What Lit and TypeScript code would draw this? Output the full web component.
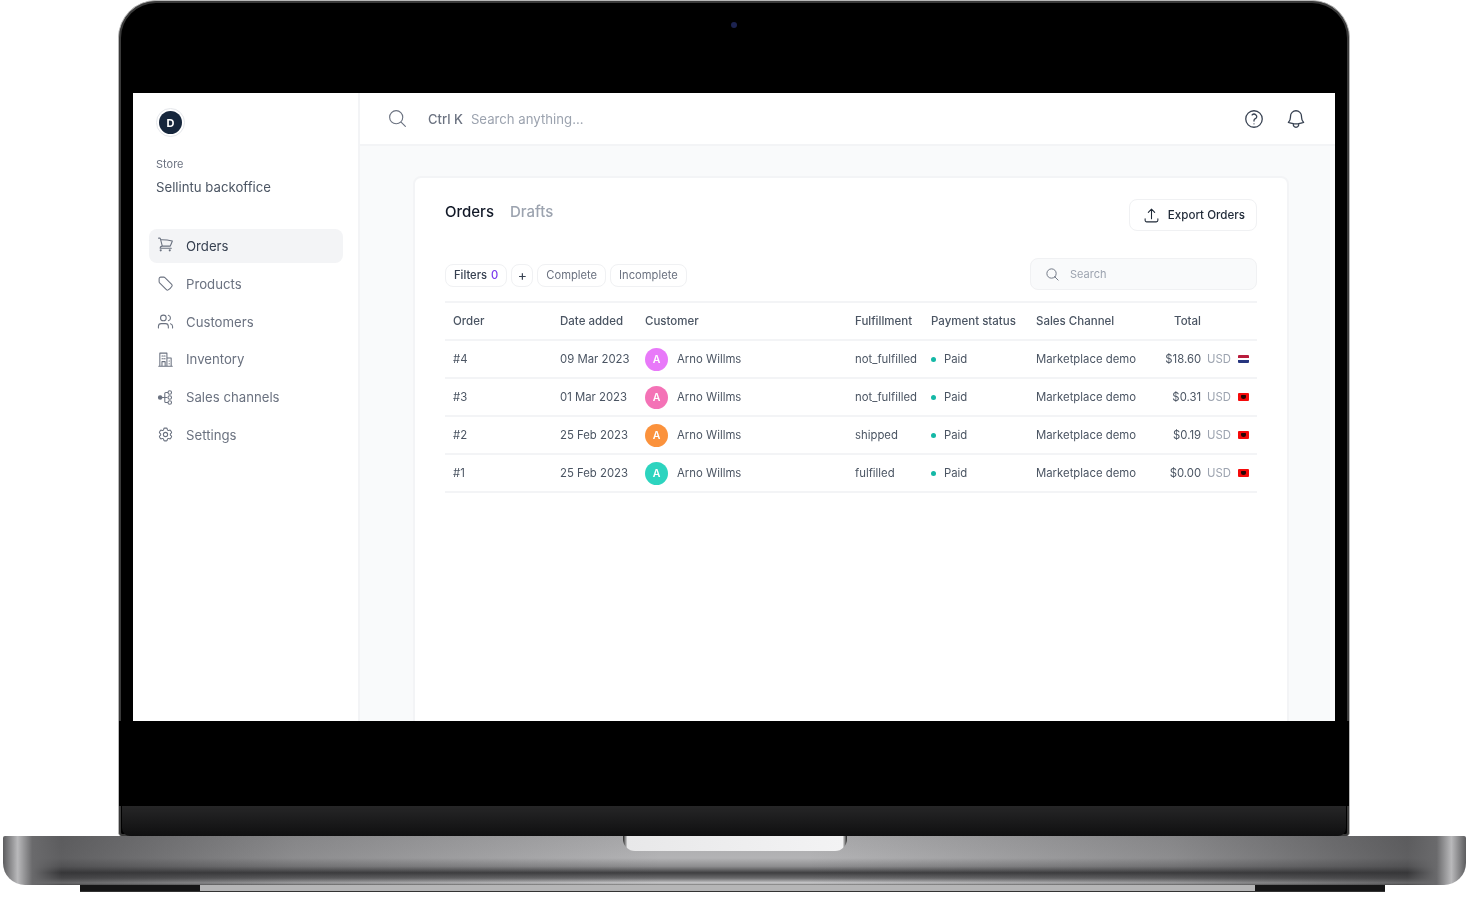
import { LitElement, html, css, svg } from "lit";
import { customElement } from "lit/decorators.js";

const ic = (body: unknown, sw = 1.5) => html`<svg class="ic" viewBox="0 0 24 24" fill="none" stroke="currentColor" stroke-width=${sw} stroke-linecap="round" stroke-linejoin="round">${body}</svg>`;

const icons = {
  search: svg`<path d="M21 21l-5.197-5.197m0 0A7.5 7.5 0 105.196 5.196a7.5 7.5 0 0010.607 10.607z"/>`,
  cart: svg`<path d="M2.25 3h1.386c.51 0 .955.343 1.087.835l.383 1.437M7.5 14.25a3 3 0 00-3 3h15.75m-12.75-3h11.218c1.121-2.3 2.1-4.684 2.924-7.138a60.114 60.114 0 00-16.536-1.84M7.5 14.25L5.106 5.272M6 20.25a.75.75 0 11-1.5 0 .75.75 0 011.5 0zm12.75 0a.75.75 0 11-1.5 0 .75.75 0 011.5 0z"/>`,
  tag: svg`<path d="M9.568 3H5.25A2.25 2.25 0 003 5.25v4.318c0 .597.237 1.17.659 1.591l9.581 9.581c.699.699 1.78.872 2.607.33a18.095 18.095 0 005.223-5.223c.542-.827.369-1.908-.33-2.607L11.16 3.66A2.25 2.25 0 009.568 3z"/>`,
  users: svg`<path d="M16 21v-2a4 4 0 0 0-4-4H6a4 4 0 0 0-4 4v2"/><circle cx="9" cy="7" r="4"/><path d="M22 21v-2a4 4 0 0 0-3-3.87"/><path d="M16 3.13a4 4 0 0 1 0 7.75"/>`,
  building: svg`<path d="M2.5 21.5h19M4 21.5V3h10v18.5M14 10h6v11.5M7 7h1.5M10 7h1.5M7 11h1.5M10 11h1.5M7 15h4.5v6.5H7zM17 14h.5M17 18h.5"/>`,
  channels: svg`<circle cx="4.5" cy="12" r="2.5" fill="currentColor"/><path d="M7 12h7M11 12V6.5c0-1 .5-1.5 1.5-1.5H15M11 12v5.5c0 1 .5 1.5 1.5 1.5H15"/><circle cx="18" cy="5" r="2.5"/><circle cx="18" cy="12" r="2.5"/><circle cx="18" cy="19" r="2.5"/>`,
  cog: svg`<path d="M9.594 3.94c.09-.542.56-.94 1.11-.94h2.593c.55 0 1.02.398 1.11.94l.213 1.281c.063.374.313.686.645.87.074.04.147.083.22.127.324.196.72.257 1.075.124l1.217-.456a1.125 1.125 0 011.37.49l1.296 2.247a1.125 1.125 0 01-.26 1.431l-1.003.827c-.293.24-.438.613-.431.992a6.759 6.759 0 010 .255c-.007.378.138.75.43.99l1.005.828c.424.35.534.954.26 1.43l-1.298 2.247a1.125 1.125 0 01-1.369.491l-1.217-.456c-.355-.133-.75-.072-1.076.124a6.57 6.57 0 01-.22.128c-.331.183-.581.495-.644.869l-.213 1.28c-.09.543-.56.941-1.11.941h-2.594c-.55 0-1.02-.398-1.11-.94l-.213-1.281c-.062-.374-.312-.686-.644-.87a6.52 6.52 0 01-.22-.127c-.325-.196-.72-.257-1.076-.124l-1.217.456a1.125 1.125 0 01-1.369-.49l-1.297-2.247a1.125 1.125 0 01.26-1.431l1.004-.827c.292-.24.437-.613.43-.992a6.932 6.932 0 010-.255c.007-.378-.138-.75-.43-.99l-1.004-.828a1.125 1.125 0 01-.26-1.43l1.297-2.247a1.125 1.125 0 011.37-.491l1.216.456c.356.133.751.072 1.076-.124.072-.044.146-.087.22-.128.332-.183.582-.495.644-.869l.214-1.281z"/><circle cx="12" cy="12" r="3"/>`,
  help: svg`<path d="M9.879 7.519c1.171-1.025 3.071-1.025 4.242 0 1.172 1.025 1.172 2.687 0 3.712-.203.179-.43.326-.67.442-.745.361-1.45.999-1.45 1.827v.75M21 12a9 9 0 11-18 0 9 9 0 0118 0zm-9 5.25h.008v.008H12v-.008z"/>`,
  bell: svg`<path d="M14.857 17.082a23.848 23.848 0 005.454-1.31A8.967 8.967 0 0118 9.75V9A6 6 0 006 9v.75a8.967 8.967 0 01-2.312 6.022c1.733.64 3.56 1.085 5.455 1.31m5.714 0a24.255 24.255 0 01-5.714 0m5.714 0a3 3 0 11-5.714 0"/>`,
  upload: svg`<path d="M3 16.5v2.25A2.25 2.25 0 005.25 21h13.5A2.25 2.25 0 0021 18.75V16.5m-13.5-9L12 3m0 0l4.5 4.5M12 3v13.5"/>`,
};

const nav = [
  ["Orders", icons.cart, true],
  ["Products", icons.tag, false],
  ["Customers", icons.users, false],
  ["Inventory", icons.building, false],
  ["Sales channels", icons.channels, false],
  ["Settings", icons.cog, false],
] as const;

const rows = [
  { id: "#4", date: "09 Mar 2023", color: "#e879f9", ful: "not_fulfilled", total: "$18.60", flag: "nl" },
  { id: "#3", date: "01 Mar 2023", color: "#f472b6", ful: "not_fulfilled", total: "$0.31", flag: "al" },
  { id: "#2", date: "25 Feb 2023", color: "#fb923c", ful: "shipped", total: "$0.19", flag: "al" },
  { id: "#1", date: "25 Feb 2023", color: "#2dd4bf", ful: "fulfilled", total: "$0.00", flag: "al" },
];

@customElement("app-root")
export class AppRoot extends LitElement {
  static styles = css`
    :host { display: block; width: 1469px; height: 900px; background: #fff; overflow: hidden; font-family: Inter, "Liberation Sans", sans-serif; }
    * { box-sizing: border-box; }
    .ic { display: block; flex: none; }

    .lid { width: 1232px; height: 836px; margin-left: 118px; background: #000; border-radius: 38px 38px 4px 4px; border: 1px solid #b8b8b8; border-bottom: 0; box-shadow: inset 0 0 0 2px #3a3a3a; display: flex; flex-direction: column; }
    .cam { height: 92px; display: flex; justify-content: center; padding-top: 21px; }
    .cam i { width: 6px; height: 6px; border-radius: 50%; background: #1c2350; }
    .screen { margin: 0 14px; height: 628px; flex: none; background: #fff; display: flex; overflow: hidden; filter: blur(.4px); color: #4b5563; }
    .lower { flex: 1; background: #000; }
    .chin { height: 30px; margin: 0 3px; background: linear-gradient(#262627, #0f0f10); border-radius: 0 0 8px 8px; }

    .side { width: 227px; flex: none; border-right: 2px solid #f3f4f6; padding: 16px 15px 0 16px; }
    .logo { width: 29px; height: 29px; margin-left: 7px; margin-top: -1px; border-radius: 50%; border: 1px solid #e5e7eb; padding: 2px; }
    .logo span { display: flex; width: 100%; height: 100%; border-radius: 50%; background: #16263c; color: #fff; font-size: 11px; font-weight: 700; align-items: center; justify-content: center; }
    .store { margin: 19px 0 0 7px; font-size: 11px; line-height: 16px; color: #6b7280; }
    .brand { margin: 6px 0 0 7px; font-size: 13.2px; line-height: 18px; color: #4b5563; }
    .nav { margin-top: 33px; display: flex; flex-direction: column; gap: 3.8px; }
    .item { height: 34px; display: flex; align-items: center; gap: 12px; padding-left: 8px; border-radius: 8px; font-size: 13.2px; color: #6b7280; }
    .item .ic { width: 17px; height: 17px; color: #6b7280; }
    .item.on { background: #f3f4f6; color: #374151; }
    .item.on .ic { margin-top: -4px; }

    .main { flex: 1; min-width: 0; display: flex; flex-direction: column; background: #f9fafb; }
    .top { height: 53px; flex: none; background: #fff; border-bottom: 2px solid #f3f4f6; display: flex; align-items: center; padding: 0 28px 0 27px; }
    .top .s { width: 21px; height: 21px; color: #6b7280; }
    .kbd { margin-left: 20px; font-size: 13px; font-weight: 500; color: #6b7280; }
    .ph { margin-left: 8px; font-size: 13.2px; color: #9ca3af; }
    .top .h { margin-left: auto; width: 22px; height: 22px; color: #374151; }
    .top .b { margin-left: 20px; width: 22px; height: 22px; color: #374151; }

    .body { padding: 30px 46px 0 53px; }
    .card { height: 600px; background: #fff; border: 2px solid #f3f4f6; border-radius: 8px; padding: 23px 30px 0 30px; }
    .head { display: flex; align-items: flex-start; }
    .tab { font-size: 15px; font-weight: 500; color: #111827; line-height: 22px; }
    .tab.off { margin-left: 16px; color: #9ca3af; }
    .export { margin-left: auto; margin-top: -2px; height: 32px; display: flex; align-items: center; gap: 8px; padding: 0 11px 0 13px; background: #fff; border: 1.5px solid #f0f1f3; border-radius: 8px; font-family: inherit; font-size: 11.6px; font-weight: 500; color: #1f2937; }
    .export .ic { width: 17px; height: 17px; color: #1f2937; }

    .filters { margin-top: 28px; display: flex; align-items: center; gap: 4px; height: 32px; }
    .chip { height: 23px; display: flex; align-items: center; padding: 0 8px; border: 1.5px solid #f0f1f3; border-radius: 8px; font-size: 11.2px; color: #6b7280; background: #fff; white-space: nowrap; }
    .chip.f { font-weight: 500; color: #374151; }
    .chip b { margin-left: 4px; color: #7c3aed; font-weight: 500; }
    .chip.p { width: 22px; padding: 0 0 2px; justify-content: center; font-size: 14px; color: #374151; }
    .find { margin-left: auto; margin-bottom: 2px; width: 227px; height: 32px; display: flex; align-items: center; gap: 10px; padding-left: 14px; background: #f9fafb; border: 1.5px solid #f0f1f3; border-radius: 8px; font-size: 11px; color: #9ca3af; }
    .find .ic { width: 15px; height: 15px; color: #6b7280; }

    .table { margin-top: 10px; border-top: 2px solid #f3f4f6; font-size: 11.35px; }
    .row { display: grid; grid-template-columns: 107px 85px 210px 76px 105px 1fr 110px; align-items: center; height: 38px; padding: 0 8px; border-bottom: 2px solid #f3f4f6; color: #4b5563; white-space: nowrap; }
    .row.hd { font-weight: 500; font-size: 11.5px; color: #4b5563; }
    .who { display: flex; align-items: center; gap: 9px; }
    .av { width: 23px; height: 23px; border-radius: 50%; color: #fff; font-size: 10.5px; font-weight: 600; display: flex; align-items: center; justify-content: center; }
    .paid { display: flex; align-items: center; gap: 8px; }
    .paid i { width: 5px; height: 5px; border-radius: 50%; background: #14b8a6; }
    .tot { display: flex; justify-content: flex-end; align-items: center; }
    .usd { margin-left: 6px; color: #9ca3af; }
    .hd .tot { padding-right: 48px; }
    .flag { width: 11px; height: 8px; margin-left: 7px; border-radius: 1px; }
    .flag.nl { background: linear-gradient(#b91c3c 0 33%, #fff 33% 66%, #27367f 66%); }
    .flag.al { background: #f50a0a; display: flex; align-items: center; justify-content: center; }
    .flag.al::after { content: ""; width: 5px; height: 4px; border-radius: 1px 1px 3px 3px; background: #2a0505; }

    .base { width: 1463px; height: 49px; margin-left: 3px; border-radius: 2px 2px 22px 22px; display: flex; justify-content: center;
      background:
        linear-gradient(90deg, #5c5c5e 0, #b9b9bb 1%, #6a6a6c 2%, rgba(50,50,52,.65) 4%, rgba(50,50,52,.3) 20%, rgba(50,50,52,0) 45%, rgba(50,50,52,0) 55%, rgba(50,50,52,.3) 80%, rgba(50,50,52,.65) 96%, #6a6a6c 98%, #b9b9bb 99%, #5c5c5e 100%),
        linear-gradient(#a9a9ab 0, #b3b3b5 45%, #8d8d8f 62%, #3f3f41 75%, #6a6a6c 86%, #cbcbcd 96%, #777 100%);
    }
    .notch { width: 224px; height: 15px; background: linear-gradient(90deg, #222 0, #e8e8e9 2%, #f3f3f4 98%, #222 100%); border-radius: 0 0 12px 12px; }
    .feet { width: 1305px; height: 7px; margin-left: 80px; display: flex; background: #b5b5b6; border-bottom: 1px solid #333; }
    .feet i { width: 120px; background: #151516; }
    .feet i + i { margin-left: auto; width: 130px; }
  `;

  render() {
    return html`
      <div class="lid">
        <div class="cam"><i></i></div>
        <div class="screen">
          <aside class="side">
            <div class="logo"><span>D</span></div>
            <div class="store">Store</div>
            <div class="brand">Sellintu backoffice</div>
            <nav class="nav">
              ${nav.map(([t, i, on]) => html`<div class="item ${on ? "on" : ""}">${ic(i)}<span>${t}</span></div>`)}
            </nav>
          </aside>
          <div class="main">
            <header class="top">
              <span class="s">${ic(icons.search, 1.3)}</span>
              <span class="kbd">Ctrl K</span><span class="ph">Search anything...</span>
              <span class="h">${ic(icons.help, 1.4)}</span>
              <span class="b">${ic(icons.bell, 1.4)}</span>
            </header>
            <div class="body">
              <section class="card">
                <div class="head">
                  <span class="tab">Orders</span><span class="tab off">Drafts</span>
                  <button class="export">${ic(icons.upload)}<span>Export Orders</span></button>
                </div>
                <div class="filters">
                  <span class="chip f">Filters<b>0</b></span>
                  <span class="chip p">+</span>
                  <span class="chip">Complete</span>
                  <span class="chip">Incomplete</span>
                  <div class="find">${ic(icons.search)}<span>Search</span></div>
                </div>
                <div class="table">
                  <div class="row hd"><span>Order</span><span>Date added</span><span>Customer</span><span>Fulfillment</span><span>Payment status</span><span>Sales Channel</span><span class="tot">Total</span></div>
                  ${rows.map((r) => html`<div class="row">
                    <span>${r.id}</span><span>${r.date}</span>
                    <span class="who"><span class="av" style="background:${r.color}">A</span>Arno Willms</span>
                    <span>${r.ful}</span>
                    <span class="paid"><i></i>Paid</span>
                    <span>Marketplace demo</span>
                    <span class="tot">${r.total}<span class="usd">USD</span><span class="flag ${r.flag}"></span></span>
                  </div>`)}
                </div>
              </section>
            </div>
          </div>
        </div>
        <div class="lower"></div>
        <div class="chin"></div>
      </div>
      <div class="base"><div class="notch"></div></div>
      <div class="feet"><i></i><i></i></div>
    `;
  }
}
